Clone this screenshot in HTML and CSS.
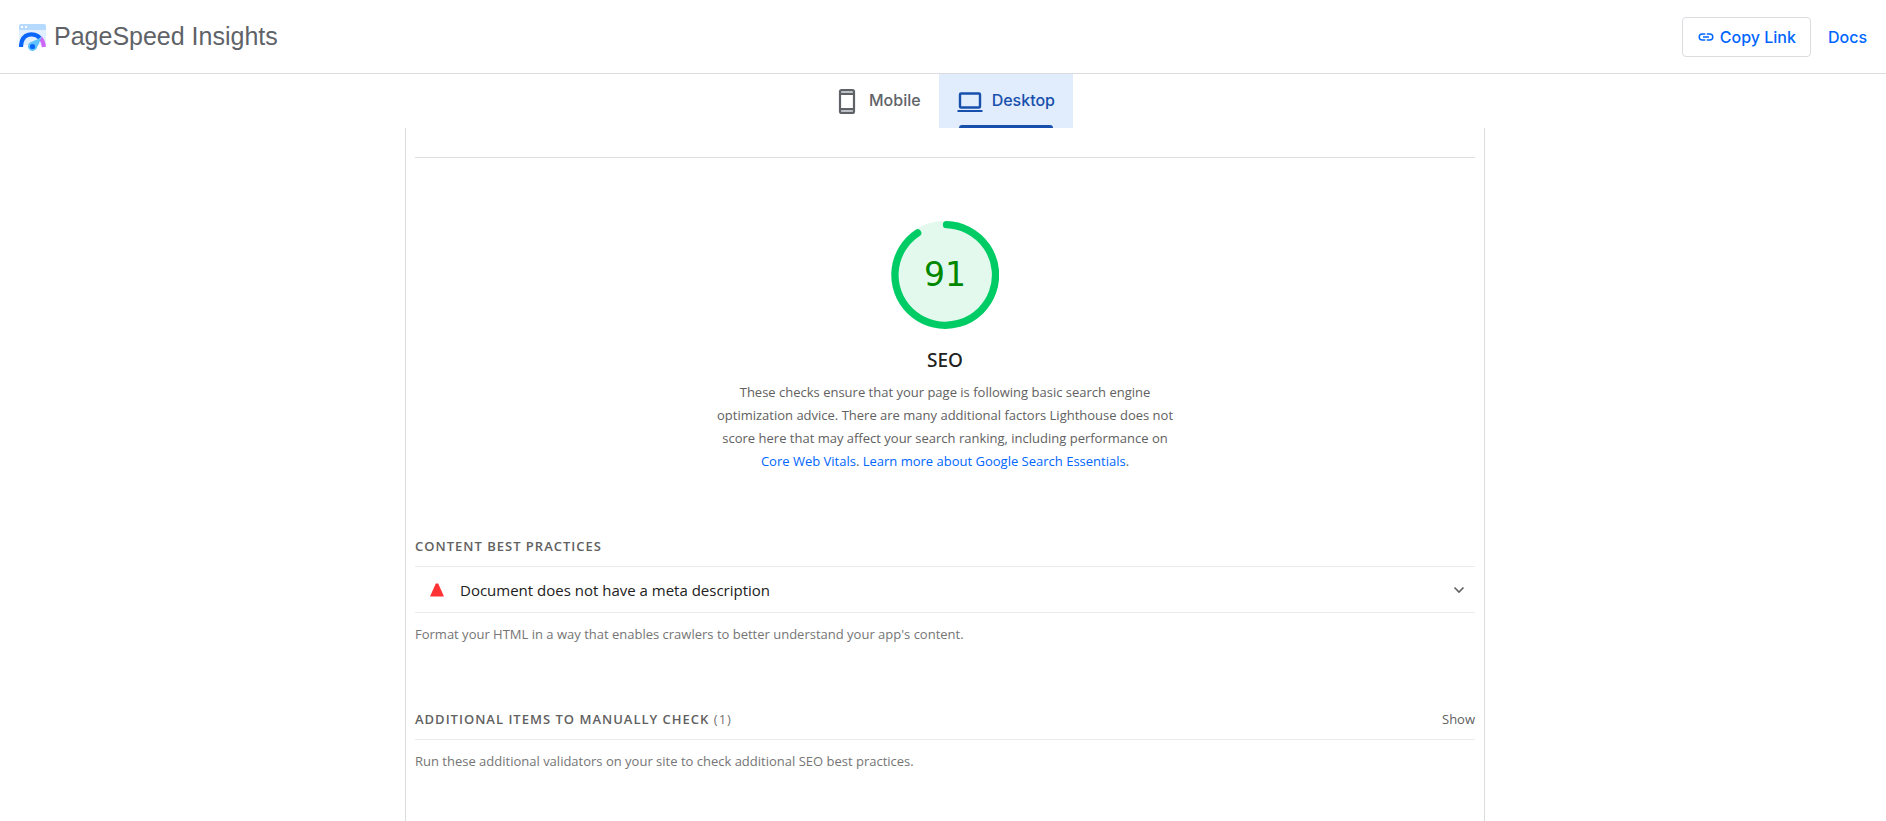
FILE: index.html
```html
<!DOCTYPE html>
<html lang="en">
<head>
<meta charset="utf-8">
<meta name="viewport" content="width=device-width, initial-scale=1">
<title>PageSpeed Insights</title>
<link rel="stylesheet" href="styles.css">
</head>
<body>
<header class="header">
  <a class="brand" href="#">
    <svg class="brand-logo" viewBox="0 0 27 27" aria-hidden="true">
      <path d="M0 6h27v15H0z" fill="#e1effe"/>
      <path d="M0 6V2a2 2 0 0 1 2-2h23a2 2 0 0 1 2 2v4z" fill="#b5dafe"/>
      <path d="M2 2h2v2H2zM6 2h2v2H6z" fill="#fff"/>
      <path d="M2 23C2 8.500 15.500 8 21 14" fill="none" stroke="#0a66fb" stroke-width="4.200"/>
      <path d="M21.500 14q3 3.500 3.400 9" fill="none" stroke="#ce67f6" stroke-width="4.200"/>
      <path d="M22.500 13.500 17.600 24.500a4.600 4.600 0 1 1-6.600-6z" fill="#5fc3fb"/>
      <circle cx="13.500" cy="22.500" r="2.600" fill="#0a66fb"/>
    </svg>
    <span class="brand-name">PageSpeed Insights</span>
  </a>
  <nav class="header-actions">
    <button class="copy-button" type="button">
      <svg class="link-icon" viewBox="0 0 24 24" aria-hidden="true"><path fill="currentColor" d="M3.900 12a3.100 3.100 0 0 1 3.100-3.100h4V7H7a5 5 0 0 0 0 10h4v-1.900H7A3.100 3.100 0 0 1 3.900 12zM8 13h8v-2H8zm9-6h-4v1.900h4a3.100 3.100 0 0 1 0 6.200h-4V17h4a5 5 0 0 0 0-10z"/></svg>
      Copy Link
    </button>
    <a class="docs-link" href="#">Docs</a>
  </nav>
</header>
<div class="tabs" role="tablist">
  <button class="tab" type="button" role="tab" aria-selected="false">
    <svg class="tab-icon" viewBox="0 0 26 26" aria-hidden="true">
      <rect x="6" y="2" width="14" height="23" rx="1.500" fill="#bdc1c6"/>
      <path d="M6 6.500h14v14H6z" fill="#fff"/>
      <rect x="6" y="2" width="14" height="23" rx="1.500" fill="none" stroke="currentColor" stroke-width="2.200"/>
      <path d="M6 6h14M6 21h14" stroke="currentColor" stroke-width="2"/>
    </svg>
    <span class="tab-label">Mobile</span>
  </button>
  <button class="tab tab-active" type="button" role="tab" aria-selected="true">
    <svg class="tab-icon" viewBox="0 0 26 26" aria-hidden="true">
      <rect x="3" y="5.500" width="20" height="14" rx="1" fill="none" stroke="currentColor" stroke-width="2.400"/>
      <path d="M.5 23h25" stroke="currentColor" stroke-width="2"/>
    </svg>
    <span class="tab-label">Desktop</span>
  </button>
</div>
<div class="page">
<main class="report">
  <section class="summary">
    <div class="gauge">
      <svg class="gauge-ring" viewBox="0 0 108 108" aria-hidden="true">
        <circle cx="54" cy="54" r="54" fill="#e4f9ee"/>
        <path d="M55.500 3.700A50.300 50.300 0 1 1 26.700 11.900" fill="none" stroke="#0c6" stroke-width="7.300" stroke-linecap="round"/>
      </svg>
      <span class="gauge-score">91</span>
    </div>
    <h1 class="summary-title">SEO</h1>
    <p class="summary-text">These checks ensure that your page is following basic search engine optimization advice. There are many additional factors Lighthouse does not score here that may affect your search ranking, including performance on <a href="#">Core Web Vitals</a>. <a href="#">Learn more about Google Search Essentials</a>.</p>
  </section>
  <section class="group">
    <div class="group-header"><h2 class="group-title">CONTENT BEST PRACTICES</h2></div>
    <button class="audit" type="button" aria-expanded="false">
      <svg class="audit-icon" viewBox="0 0 14 14" aria-hidden="true"><path d="M5.800.5h2.400L14 13.500H0z" fill="#f33"/></svg>
      <span class="audit-title">Document does not have a meta description</span>
      <svg class="chevron" viewBox="0 0 12 12" aria-hidden="true"><path d="m1.500 3.500 4.500 4.500 4.500-4.500" fill="none" stroke="#616161" stroke-width="1.600"/></svg>
    </button>
    <p class="group-text">Format your HTML in a way that enables crawlers to better understand your app's content.</p>
  </section>
  <section class="group">
    <div class="group-header">
      <h2 class="group-title">ADDITIONAL ITEMS TO MANUALLY CHECK <span class="group-count">(1)</span></h2>
      <button class="show-button" type="button">Show</button>
    </div>
    <p class="group-text">Run these additional validators on your site to check additional SEO best practices.</p>
  </section>
</main>
</div>
</body>
</html>
```
FILE: styles.css
```css
* {
  box-sizing: border-box;
}

body {
  display: flex;
  flex-direction: column;
  min-height: 100vh;
  margin: 0;
  background: #fff;
  color: #212121;
  font-family: "Open Sans", "Noto Sans", sans-serif;
}

h1,
h2,
p {
  margin: 0;
}

a {
  color: #06f;
  text-decoration: none;
}

button {
  margin: 0;
  padding: 0;
  border: 0;
  background: none;
  color: inherit;
  font: inherit;
  cursor: pointer;
}

.header {
  display: flex;
  align-items: center;
  justify-content: space-between;
  padding: 16px 19px 15px;
  border-bottom: 1px solid #dadce0;
}

.brand {
  display: flex;
  align-items: center;
  gap: 8px;
  color: #5f6368;
  font: 25px/40px "Liberation Sans", Arial, sans-serif;
}

.brand-name,
.tab-label {
  padding-bottom: 2px;
}

.brand-logo {
  width: 27px;
  height: 27px;
}

.header-actions {
  display: flex;
  align-items: center;
  gap: 17px;
  font: 500 16px/24px Inter, sans-serif;
}

.copy-button {
  display: flex;
  align-items: center;
  gap: 5px;
  height: 40px;
  padding: 0 14px;
  border: 1px solid #dadce0;
  border-radius: 4px;
  color: #06f;
}

.link-icon {
  width: 18px;
  height: 18px;
}

.tabs {
  display: flex;
  justify-content: center;
  padding-left: 3px;
}

.tab {
  display: flex;
  align-items: center;
  gap: 9px;
  height: 54px;
  padding: 0 18px;
  color: #5f6368;
  font: 500 16px/24px Inter, sans-serif;
}

.tab-icon {
  width: 26px;
  height: 26px;
}

.tab-active {
  position: relative;
  background: #e1edfc;
  color: #174fac;
}

.tab-active::after {
  content: "";
  position: absolute;
  right: 20px;
  bottom: 0;
  left: 20px;
  height: 3px;
  border-radius: 3px 3px 0 0;
  background: #174fac;
}

.page {
  display: flex;
  flex: 1;
  justify-content: center;
  padding-left: 4px;
}

.report {
  width: 100%;
  max-width: 1080px;
  padding: 29px 9px 0;
  border: solid #dadce0;
  border-width: 0 1px;
}

.summary {
  display: flex;
  flex-direction: column;
  align-items: center;
  padding: 63px 0 61px;
  border-top: 1px solid #e0e0e0;
  text-align: center;
}

.gauge {
  display: grid;
  place-items: center;
  width: 108px;
  height: 108px;
}

.gauge-ring,
.gauge-score {
  grid-area: 1 / 1;
}

.gauge-ring {
  width: 100%;
}

.gauge-score {
  color: #080;
  font: 33px/48px "DejaVu Sans", sans-serif;
}

.summary-title {
  padding-top: 15px;
  font-family: "Noto Sans", sans-serif;
  font-size: 19px;
  font-weight: 500;
  line-height: 32px;
}

.summary-text {
  max-width: 464px;
  padding-top: 5px;
  color: #616161;
  font-size: 13px;
  line-height: 23px;
}

.group {
  padding-bottom: 61px;
}

.group:last-child {
  padding-bottom: 0;
}

.group-header {
  display: flex;
  justify-content: space-between;
  padding-bottom: 8px;
  border-bottom: 1px solid #ebebeb;
  color: #616161;
  font-size: 13px;
  line-height: 24px;
}

.group-title {
  font-size: 13px;
  font-weight: 600;
  letter-spacing: 1px;
}

.group-count {
  color: #757575;
  font-weight: 400;
}

.audit {
  display: flex;
  align-items: center;
  width: 100%;
  height: 46px;
  padding: 0 10px 0 15px;
  border-bottom: 1px solid #ebebeb;
  font-size: 15px;
  text-align: left;
}

.audit-icon {
  width: 14px;
  height: 14px;
}

.audit-title {
  flex: 1;
  padding-left: 16px;
}

.chevron {
  width: 12px;
  height: 12px;
}

.group-text {
  padding-top: 10px;
  color: #757575;
  font-size: 13px;
  line-height: 23px;
}
```
